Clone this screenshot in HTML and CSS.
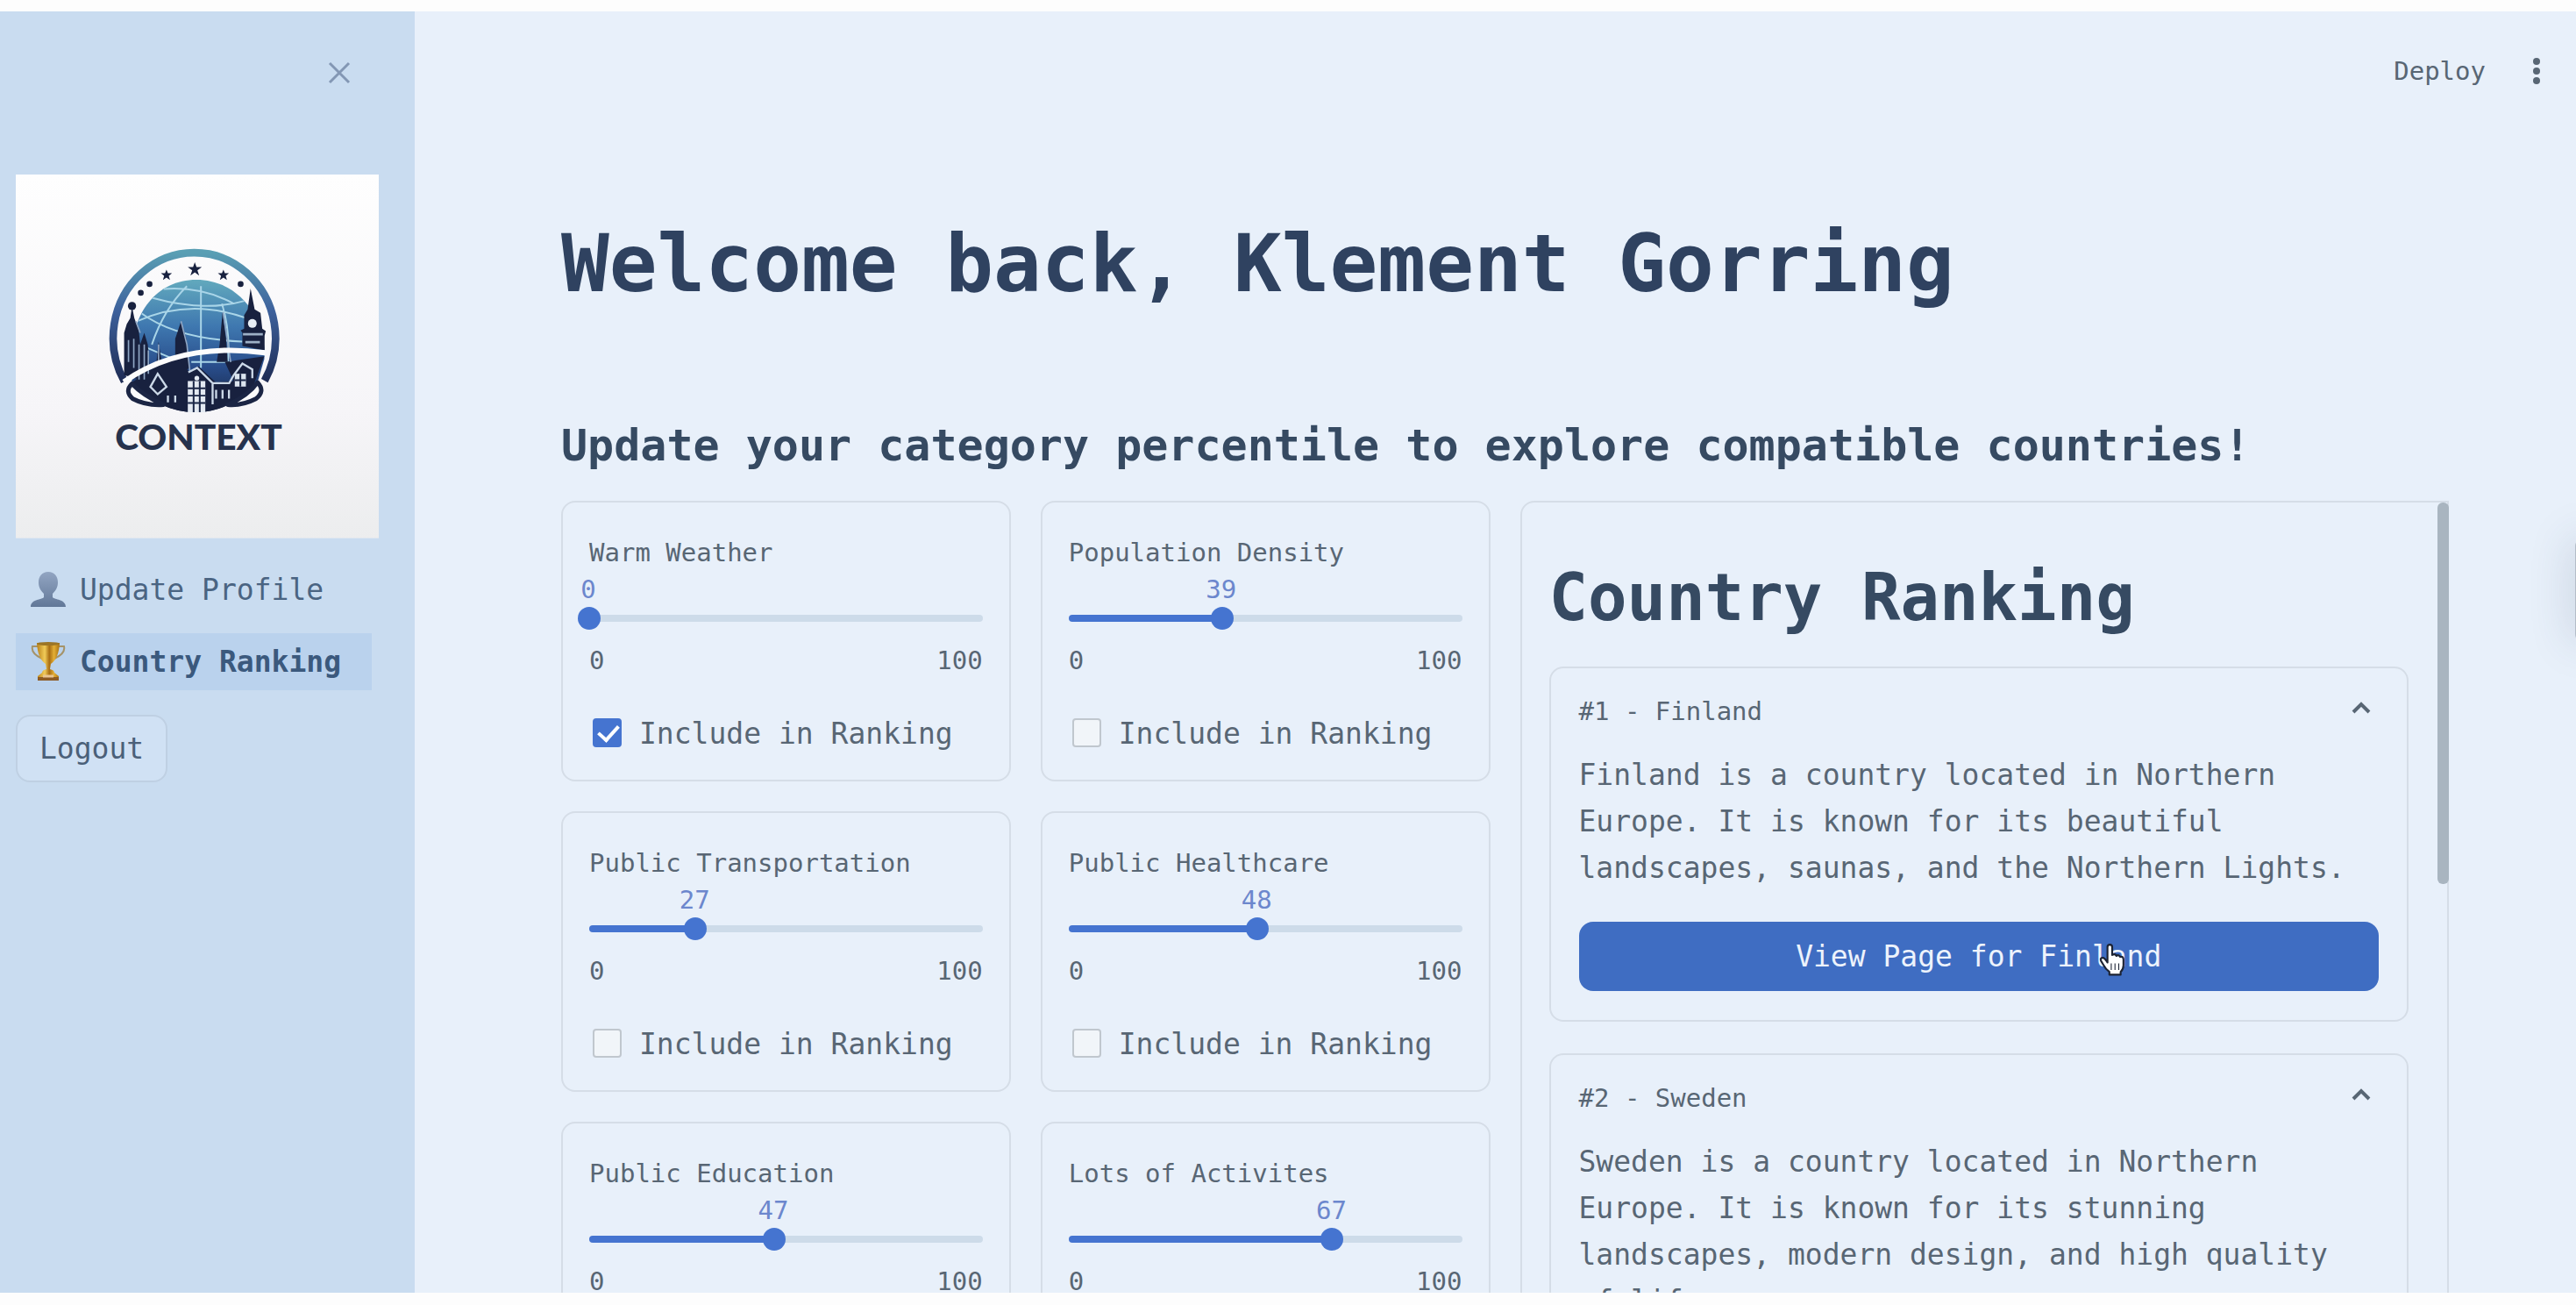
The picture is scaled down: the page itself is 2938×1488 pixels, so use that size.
FILE: index.html
```html
<!DOCTYPE html>
<html lang="en">
<head>
<meta charset="utf-8">
<title>Country Ranking</title>
<link rel="stylesheet" href="styles.css">
</head>
<body>
<div class="app">
  <aside class="sidebar">
    <button class="close" type="button" aria-label="Close sidebar">
      <svg viewBox="0 0 40 40"><path d="M9 9 31 31M31 9 9 31" fill="none" stroke="currentColor" stroke-width="3"/></svg>
    </button>
    <svg class="logo" viewBox="54 58 1243 1245" role="img" aria-label="Context logo">
      <defs>
        <linearGradient id="paper" x1="0" y1="0" x2="0" y2="1"><stop offset="0" stop-color="#fefefe"/><stop offset=".65" stop-color="#f6f5f8"/><stop offset="1" stop-color="#ecedee"/></linearGradient>
        <linearGradient id="ring" x1="0" y1="0" x2="0" y2="1"><stop offset="0" stop-color="#5a9fb4"/><stop offset=".45" stop-color="#3d619c"/><stop offset="1" stop-color="#1f2c55"/></linearGradient>
        <linearGradient id="globe" x1="0" y1="0" x2="0" y2="1"><stop offset="0" stop-color="#62a9bd"/><stop offset=".35" stop-color="#3f78b0"/><stop offset=".65" stop-color="#294e8c"/><stop offset="1" stop-color="#16213f"/></linearGradient>
        <clipPath id="disc"><path d="M450 768C430 560 520 418 672 418S912 560 905 690L870 775Q790 870 670 872Q540 870 450 768Z"/></clipPath>
      </defs>
      <rect x="54" y="58" width="1243" height="1245" fill="url(#paper)"/>
      <path d="M426 766A278 292 0 1 1 906 764" fill="none" stroke="url(#ring)" stroke-width="26"/>
      <path d="M452 768C425 560 520 418 672 418S915 560 905 690L880 775Q790 870 670 872Q540 870 452 768Z" fill="url(#globe)"/>
      <g clip-path="url(#disc)" fill="none" stroke="#a9d5e8" stroke-width="6">
        <path d="M688 440V720M470 560Q650 480 845 550M520 480Q700 530 840 490M560 450Q690 440 800 500M640 440Q560 520 520 640M480 530Q600 620 830 630M760 500Q790 600 780 700M500 650Q570 680 620 700M655 700H820"/>
      </g>
      <g fill="#18213f">
        <path d="M667 358l6 17h18l-15 11 6 18-15-11-15 11 6-18-15-11h18zM570 384l5 12h14l-11 9 4 14-12-8-12 8 4-14-11-9h14zM765 384l5 12h14l-11 9 4 14-12-8-12 8 4-14-11-9h14z"/>
        <circle cx="512" cy="433" r="10"/><circle cx="482" cy="463" r="10"/><circle cx="824" cy="433" r="10"/><circle cx="452" cy="508" r="14"/>
        <path d="M425 745V600L434 570 446 550 452 510 460 550 475 590 480 640 494 600 506 640 515 740 480 760ZM830 645V600L824 592 836 586V540L848 520 858 448 872 520 892 532 898 586 910 594 906 610V660ZM752 640 762 530 774 620 780 700H742ZM600 680V620L620 560 638 620 650 720 610 740ZM536 700 543 630 552 690Z"/>
        <path d="M455 768Q560 690 610 690L650 735 680 715 740 770 800 765 770 700 905 680 870 775Q790 870 670 872Q540 870 455 768Z"/>
      </g>
      <circle cx="864" cy="568" r="15" fill="#e8eef5"/>
      <path d="M832 605H900M840 632H890" stroke="#9db0c6" stroke-width="8"/>
      <path d="M440 625V700M458 620V720M476 640V760M494 640V760M508 660V740M465 560 480 600M620 560 640 640 650 730M543 640V700M764 530 778 620 790 700" fill="none" stroke="#8fa6c4" stroke-width="5"/>
      <path d="M424 768Q620 630 908 668" fill="none" stroke="#fcfcfd" stroke-width="18"/>
      <path d="M645 735 675 720 728 772H785L800 745 830 705 864 725V755M728 775V845M540 740 515 785 540 810 570 785ZM575 815V838M600 815V838M740 795V825M762 795V825M784 795V825" fill="none" stroke="#ccd9e8" stroke-width="7"/>
      <path d="M643 765H703V872H643Z" fill="#e4eaf2"/>
      <path d="M643 790H703M643 815H703M643 840H703M663 765V872M684 765V872" stroke="#1b2747" stroke-width="6"/>
      <circle cx="674" cy="755" r="8" fill="#e4eaf2"/>
      <path d="M804 740H842V784H804Z" fill="#dbe4ee"/><path d="M823 740V784M804 762H842" stroke="#1b2747" stroke-width="6"/>
      <path d="M452 774Q425 800 455 826 500 850 560 846 490 815 452 774ZM882 770Q910 800 876 826 830 850 780 846 850 815 882 770Z" fill="#fbfbfc" stroke="#1b2544" stroke-width="15" stroke-linejoin="round"/>
      <text x="680" y="1000" text-anchor="middle" class="logo-word">CONTEXT</text>
    </svg>
    <nav class="nav">
      <a href="#profile">
        <svg viewBox="0 0 42 42"><defs><linearGradient id="person" x1="0" y1="0" x2="0" y2="1"><stop offset="0" stop-color="#92a5c2"/><stop offset="1" stop-color="#627898"/></linearGradient></defs><path d="M21 1c7 0 11 5 11 12 0 6-3 10-6 13v4c2 3 15 2 15 11H1c0-9 13-8 15-11v-4c-3-3-6-7-6-13C10 6 14 1 21 1Z" fill="url(#person)"/></svg>
        <span>Update Profile</span>
      </a>
      <a href="#ranking" class="active" aria-current="page">
        <svg viewBox="0 0 42 46"><defs><linearGradient id="gold"><stop offset="0" stop-color="#b98119"/><stop offset=".35" stop-color="#f1cb58"/><stop offset=".55" stop-color="#a86d13"/><stop offset=".75" stop-color="#e3ae35"/><stop offset="1" stop-color="#a8700f"/></linearGradient></defs><path d="M9 6H3Q1 14 14 20M33 6h6Q41 14 28 20" fill="none" stroke="#a59369" stroke-width="2"/><path d="M8 2H34Q33 20 24 26L23 32Q28 33 28 36L33 40V45H9V40L14 36Q14 33 19 32L18 26Q9 20 8 2Z" fill="url(#gold)"/><path d="M9 41H33V45H9Z" fill="#8d5b24"/><path d="M15 40H27" stroke="#e9c592" stroke-width="3"/><ellipse cx="21" cy="3" rx="13" ry="2" fill="#9c7526"/></svg>
        <span>Country Ranking</span>
      </a>
    </nav>
    <button class="logout" type="button">Logout</button>
  </aside>

  <div class="page">
    <header class="toolbar">
      <button type="button">Deploy</button>
      <button type="button" aria-label="Menu">
        <svg viewBox="0 0 32 42"><g fill="currentColor"><circle cx="16" cy="10" r="4"/><circle cx="16" cy="21" r="4"/><circle cx="16" cy="32" r="4"/></g></svg>
      </button>
    </header>
    <main>
      <h1>Welcome back, Klement Gorring</h1>
      <h2>Update your category percentile to explore compatible countries!</h2>
      <div class="columns">
        <div class="cards">
          <section class="card">
            <label for="s1">Warm Weather</label>
            <output for="s1" style="--value:0">0</output>
            <div class="rail" style="--value:0"><input id="s1" type="range" min="0" max="100" value="0"></div>
            <div class="ticks"><span>0</span><span>100</span></div>
            <label class="check"><input type="checkbox" checked>Include in Ranking</label>
          </section>
          <section class="card">
            <label for="s2">Population Density</label>
            <output for="s2" style="--value:39">39</output>
            <div class="rail" style="--value:39"><input id="s2" type="range" min="0" max="100" value="39"></div>
            <div class="ticks"><span>0</span><span>100</span></div>
            <label class="check"><input type="checkbox">Include in Ranking</label>
          </section>
          <section class="card">
            <label for="s3">Public Transportation</label>
            <output for="s3" style="--value:27">27</output>
            <div class="rail" style="--value:27"><input id="s3" type="range" min="0" max="100" value="27"></div>
            <div class="ticks"><span>0</span><span>100</span></div>
            <label class="check"><input type="checkbox">Include in Ranking</label>
          </section>
          <section class="card">
            <label for="s4">Public Healthcare</label>
            <output for="s4" style="--value:48">48</output>
            <div class="rail" style="--value:48"><input id="s4" type="range" min="0" max="100" value="48"></div>
            <div class="ticks"><span>0</span><span>100</span></div>
            <label class="check"><input type="checkbox">Include in Ranking</label>
          </section>
          <section class="card">
            <label for="s5">Public Education</label>
            <output for="s5" style="--value:47">47</output>
            <div class="rail" style="--value:47"><input id="s5" type="range" min="0" max="100" value="47"></div>
            <div class="ticks"><span>0</span><span>100</span></div>
          </section>
          <section class="card">
            <label for="s6">Lots of Activites</label>
            <output for="s6" style="--value:67">67</output>
            <div class="rail" style="--value:67"><input id="s6" type="range" min="0" max="100" value="67"></div>
            <div class="ticks"><span>0</span><span>100</span></div>
          </section>
        </div>
        <section class="panel">
          <div class="scrollbar"></div>
          <h2>Country Ranking</h2>
          <details open>
            <summary>#1 - Finland <svg viewBox="0 0 24 42"><path d="M3 22 12 13 21 22" fill="none" stroke="currentColor" stroke-width="4"/></svg></summary>
            <p>Finland is a country located in Northern Europe. It is known for its beautiful landscapes, saunas, and the Northern Lights.</p>
            <button class="view" type="button">View Page for Finland
              <svg class="pointer" viewBox="0 0 28 36"><path d="M9 21V4.500Q9 2 11.500 2T14 4.500V13Q17 11 18.500 14 21 12 22.500 15 26 14 26 18V24Q26 28 23 31V34H11V31Q7 28 5 24L2 19Q1 16 4 16 6 16 9 21Z" fill="#fff" stroke="#1c2333" stroke-width="2" stroke-linejoin="round"/><path d="M13 22V29M17 22V29M21 22V29" stroke="#1c2333" stroke-width="1"/></svg>
            </button>
          </details>
          <details open>
            <summary>#2 - Sweden <svg viewBox="0 0 24 42"><path d="M3 22 12 13 21 22" fill="none" stroke="currentColor" stroke-width="4"/></svg></summary>
            <p>Sweden is a country located in Northern Europe. It is known for its stunning landscapes, modern design, and high quality of life.</p>
          </details>
        </section>
      </div>
    </main>
    <div class="edge-tab"></div>
  </div>
</div>
</body>
</html>
```
FILE: styles.css
```css
:root {
  --ink: #364a62;
  --text: #586674;
  --blue: #4574d0;
  --line: #d5dde7;
  --small: 29px;
  --base: 33px;
}

* { box-sizing: border-box; }

body {
  margin: 0;
  padding: 13px 0 14px;
  background: #fdfdfd;
  color: var(--text);
  font-family: "DejaVu Sans Mono", monospace;
  font-size: var(--base);
}

button {
  padding: 0;
  border: 0;
  background: none;
  color: inherit;
  font: inherit;
}

svg { display: block; }

h1, h2, p { margin: 0; }

.app {
  display: flex;
  height: calc(100vh - 27px);
  overflow: hidden;
  background: #e8f0fa;
}

/* Sidebar */
.sidebar {
  display: flex;
  flex: none;
  flex-direction: column;
  align-items: flex-start;
  width: 473px;
  padding: 50px 41px 0 18px;
  background: #c9dcf0;
}

.close {
  align-self: flex-end;
  width: 40px;
  margin-right: 25px;
  color: #8397b4;
}

.logo {
  width: 100%;
  margin-top: 96px;
}

.logo-word {
  fill: #26324d;
  font: 900 122px Lato, sans-serif;
}

.nav {
  display: flex;
  flex-direction: column;
  gap: 17px;
  width: 406px;
  margin-top: 26px;
}

.nav a {
  display: flex;
  align-items: center;
  gap: 15px;
  padding-left: 16px;
  color: #4a6482;
  line-height: 65px;
  text-decoration: none;
}

.nav svg { width: 42px; }

.nav .active {
  background: #bad2ed;
  color: #3b597d;
  font-weight: 700;
}

.logout {
  margin-top: 28px;
  padding: 0 25px;
  border: 2px solid #bfd0e3;
  border-radius: 16px;
  background: #d0e1f4;
  color: #4b6079;
  line-height: 73px;
}

/* Page */
.page {
  position: relative;
  flex: 1;
  min-width: 0;
  overflow: hidden;
}

.toolbar {
  display: flex;
  justify-content: flex-end;
  gap: 42px;
  padding: 47px 29px 0 0;
  font-size: var(--small);
  line-height: 42px;
}

.toolbar svg { width: 32px; }

main { padding: 144px 145px 0 167px; }

h1 {
  color: #2f4260;
  font-size: 91px;
  line-height: 110px;
}

main > h2 {
  margin: 120px 0 31px;
  color: var(--ink);
  font-size: 50px;
  line-height: 64px;
}

.columns, .cards {
  display: grid;
  grid-template-columns: 1fr 1fr;
  gap: 34px;
}

.card {
  min-height: 320px;
  padding: 36px 30px 24px;
  border: 2px solid var(--line);
  border-radius: 16px;
  font-size: var(--small);
  line-height: 42px;
}

.card > label, .card > output { display: block; }

.card > output {
  width: 60px;
  margin-left: calc(var(--value) * 1% - 31px);
  color: #6c87cd;
  text-align: center;
}

.rail {
  display: flex;
  align-items: center;
  height: 8px;
  margin: 8px 0 23px;
  border-radius: 4px;
  background: linear-gradient(to right, var(--blue) calc(var(--value) * 1%), #cddbe9 calc(var(--value) * 1%));
}

.rail input {
  flex: none;
  width: calc(100% + 26px);
  height: 26px;
  margin: 0 -13px;
  appearance: none;
  background: none;
}

.rail input::-webkit-slider-thumb {
  width: 26px;
  height: 26px;
  appearance: none;
  border-radius: 50%;
  background: var(--blue);
}

.ticks {
  display: flex;
  justify-content: space-between;
}

.card > .check {
  display: flex;
  align-items: flex-start;
  gap: 20px;
  margin-top: 37px;
  padding-left: 4px;
  font-size: var(--base);
  line-height: 52px;
}

.check input {
  width: 33px;
  height: 33px;
  margin: 8px 0 0;
  appearance: none;
  border: 2px solid #c0c7ce;
  border-radius: 4px;
  background: #f1f5f9;
}

.check input:checked {
  border-color: var(--blue);
  background: var(--blue);
}

.check input:checked::after {
  display: block;
  width: 10px;
  height: 19px;
  margin: 1px 0 0 9px;
  border: solid #fff;
  border-width: 0 4px 4px 0;
  content: "";
  transform: rotate(42deg);
}

/* Ranking panel */
.panel {
  position: relative;
  padding: 58px 44px 33px 31px;
  border: 2px solid var(--line);
  border-radius: 16px 0 0 16px;
}

.panel h2 {
  margin-bottom: 29px;
  color: var(--ink);
  font-size: 74px;
  line-height: 100px;
}

.scrollbar {
  position: absolute;
  top: 0;
  right: -2px;
  width: 13px;
  height: 435px;
  border-radius: 6px;
  background: #a9b5c0;
}

details {
  padding: 28px 32px 33px;
  border: 2px solid var(--line);
  border-radius: 16px;
}

details + details { margin-top: 36px; }

summary {
  display: flex;
  justify-content: space-between;
  margin-bottom: 25px;
  padding-right: 8px;
  font-size: var(--small);
  line-height: 42px;
}

summary svg {
  width: 24px;
  height: 42px;
}

details p { line-height: 53px; }

.view {
  position: relative;
  width: 100%;
  margin-top: 35px;
  border-radius: 16px;
  background: #3f6dc2;
  color: #edf3fc;
  line-height: 79px;
}

.pointer {
  position: absolute;
  top: 24px;
  left: 65%;
  width: 30px;
}

/* Floating tab resting just past the window's right edge */
.edge-tab {
  position: absolute;
  top: 600px;
  right: -20px;
  width: 21px;
  height: 120px;
  border-radius: 10px;
  background: #b4bdc8;
  box-shadow: 0 0 48px rgba(50, 70, 100, .25);
}
```
